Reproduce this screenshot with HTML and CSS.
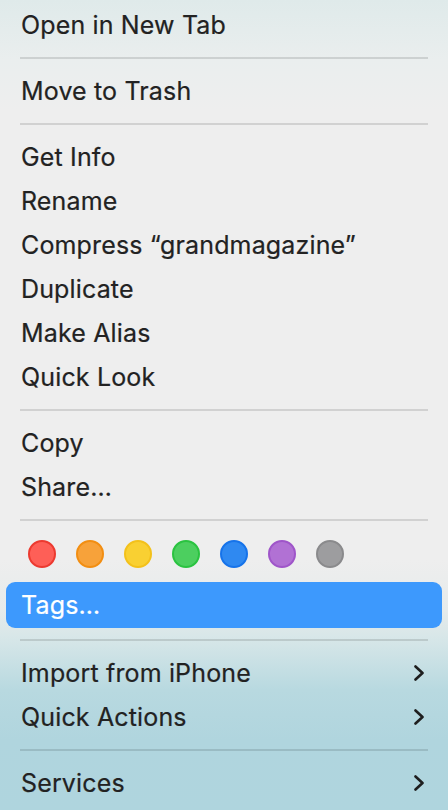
FILE: index.html
```html
<!DOCTYPE html>
<html>
<head>
<meta charset="UTF-8">
  <title>Context Menu</title>
  <link rel="stylesheet" href="styles.css">
</head>
<body>
  <div class="menu">
    <div class="item">Open in New Tab</div>
    <div class="sep"></div>
    <div class="item">Move to Trash</div>
    <div class="sep"></div>
    <div class="item">Get Info</div>
    <div class="item">Rename</div>
    <div class="item">Compress “grandmagazine”</div>
    <div class="item">Duplicate</div>
    <div class="item">Make Alias</div>
    <div class="item">Quick Look</div>
    <div class="sep"></div>
    <div class="item">Copy</div>
    <div class="item">Share…</div>
    <div class="sep"></div>
    <div class="tags">
      <span class="dot red"></span>
      <span class="dot orange"></span>
      <span class="dot yellow"></span>
      <span class="dot green"></span>
      <span class="dot blue"></span>
      <span class="dot purple"></span>
      <span class="dot gray"></span>
    </div>
    <div class="item selected">Tags…</div>
    <div class="sep"></div>
    <div class="item sub">Import from iPhone
      <svg class="chevron" width="12" height="16" viewBox="0 0 12 16"><path d="M2.5 1.5 L9.5 8 L2.5 14.5" fill="none" stroke="#1e1e1e" stroke-width="2.6" stroke-linecap="round" stroke-linejoin="round"/></svg>
    </div>
    <div class="item sub">Quick Actions
      <svg class="chevron" width="12" height="16" viewBox="0 0 12 16"><path d="M2.5 1.5 L9.5 8 L2.5 14.5" fill="none" stroke="#1e1e1e" stroke-width="2.6" stroke-linecap="round" stroke-linejoin="round"/></svg>
    </div>
    <div class="sep"></div>
    <div class="item sub">Services
      <svg class="chevron" width="12" height="16" viewBox="0 0 12 16"><path d="M2.5 1.5 L9.5 8 L2.5 14.5" fill="none" stroke="#1e1e1e" stroke-width="2.6" stroke-linecap="round" stroke-linejoin="round"/></svg>
    </div>
  </div>
</body>
</html>
```
FILE: styles.css
```css
html, body {
  margin: 0;
  height: 100%;
}

body {
  width: 448px;
  height: 810px;
  overflow: hidden;
  font-family: Inter, 'Liberation Sans', sans-serif;
  color: #222;
  background: linear-gradient(to bottom,
    #dfeaea 0px,
    #eaeeee 60px,
    #eeeeee 110px,
    #eeeeee 560px,
    #e6ebeb 610px,
    #d6e6e8 640px,
    #b8d9e0 690px,
    #b0d5de 740px,
    #afd5de 810px);
}

.menu {
  padding: 3px 6px 0 6px;
  display: flex;
  flex-direction: column;
}

.item {
  height: 44px;
  padding: 0 15px;
  display: flex;
  align-items: center;
  justify-content: space-between;
  font-size: 25px;
  letter-spacing: 0.15px;
  -webkit-text-stroke: 0.2px #222;
  border-radius: 9px;
}

.item.selected {
  background-color: #3d99fd;
  color: #fff;
  -webkit-text-stroke: 0.2px #fff;
  height: 46px;
  margin: -1px 0 1px;
}

.sep {
  height: 22px;
  display: flex;
  align-items: center;
  padding: 0 14px;
}

.sep::before {
  content: "";
  flex: 1;
  height: 2px;
  background-color: rgba(0, 0, 0, 0.12);
}

.chevron {
  margin-right: 2px;
}

.tags {
  height: 52px;
  display: flex;
  align-items: center;
  gap: 20px;
  padding: 0 0 6px 22px;
  box-sizing: border-box;
}

.dot {
  width: 24px;
  height: 24px;
  border-radius: 50%;
  border: 2px solid;
}

.red { background-color: #fe5f57; border-color: #ec3a30; }
.orange { background-color: #f7a23a; border-color: #f28e12; }
.yellow { background-color: #f9d032; border-color: #f3c11b; }
.green { background-color: #4ccf5f; border-color: #2ac340; }
.blue { background-color: #2f89f1; border-color: #1673ea; }
.purple { background-color: #b171d4; border-color: #9f55c9; }
.gray { background-color: #9d9d9f; border-color: #8a8a8c; }
```
